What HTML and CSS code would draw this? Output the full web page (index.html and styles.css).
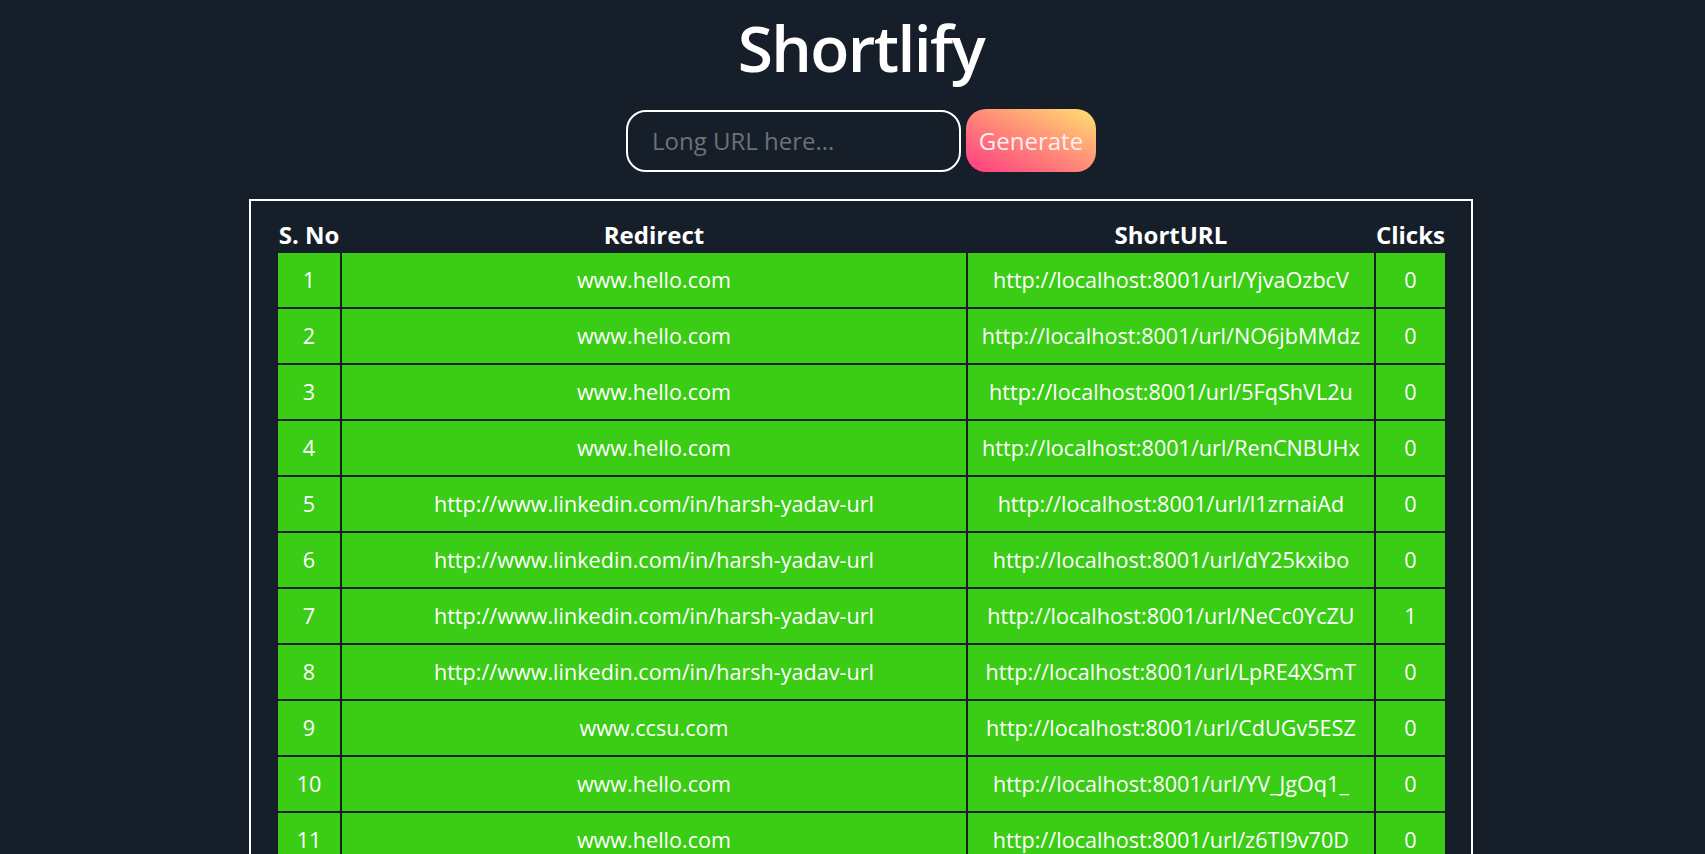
FILE: index.html
```html
<!DOCTYPE html>
<html lang="en">
<head>
<meta charset="utf-8">
<title>Shortlify</title>
<link rel="stylesheet" href="styles.css">
</head>
<body>
<div class="page">
  <h1 class="title">Shortlify</h1>
  <form class="url-form">
    <input class="url-input" type="text" placeholder="Long URL here...">
    <button class="gen-btn" type="button">Generate</button>
  </form>
  <div class="panel">
    <table class="url-table">
      <thead>
        <tr>
          <th class="c-no">S. No</th>
          <th class="c-redirect">Redirect</th>
          <th class="c-short">ShortURL</th>
          <th class="c-clicks">Clicks</th>
        </tr>
      </thead>
      <tbody>
        <tr><td>1</td><td>www.hello.com</td><td>http://localhost:8001/url/YjvaOzbcV</td><td>0</td></tr>
        <tr><td>2</td><td>www.hello.com</td><td>http://localhost:8001/url/NO6jbMMdz</td><td>0</td></tr>
        <tr><td>3</td><td>www.hello.com</td><td>http://localhost:8001/url/5FqShVL2u</td><td>0</td></tr>
        <tr><td>4</td><td>www.hello.com</td><td>http://localhost:8001/url/RenCNBUHx</td><td>0</td></tr>
        <tr><td>5</td><td>http://www.linkedin.com/in/harsh-yadav-url</td><td>http://localhost:8001/url/l1zrnaiAd</td><td>0</td></tr>
        <tr><td>6</td><td>http://www.linkedin.com/in/harsh-yadav-url</td><td>http://localhost:8001/url/dY25kxibo</td><td>0</td></tr>
        <tr><td>7</td><td>http://www.linkedin.com/in/harsh-yadav-url</td><td>http://localhost:8001/url/NeCc0YcZU</td><td>1</td></tr>
        <tr><td>8</td><td>http://www.linkedin.com/in/harsh-yadav-url</td><td>http://localhost:8001/url/LpRE4XSmT</td><td>0</td></tr>
        <tr><td>9</td><td>www.ccsu.com</td><td>http://localhost:8001/url/CdUGv5ESZ</td><td>0</td></tr>
        <tr><td>10</td><td>www.hello.com</td><td>http://localhost:8001/url/YV_JgOq1_</td><td>0</td></tr>
        <tr><td>11</td><td>www.hello.com</td><td>http://localhost:8001/url/z6TI9v70D</td><td>0</td></tr>
      </tbody>
    </table>
  </div>
</div>
</body>
</html>
```

FILE: styles.css
```css
html, body {
  margin: 0;
  padding: 0;
  background: #161f29;
}

body {
  font-family: "Open Sans", "Liberation Sans", sans-serif;
  color: #ffffff;
}

.page {
  padding-left: 17px;
  display: flex;
  flex-direction: column;
  align-items: center;
}

.title {
  margin: 4px 0 0;
  font-size: 64px;
  font-weight: 600;
  letter-spacing: -1.6px;
  line-height: 87px;
  color: #ffffff;
}

.url-form {
  margin: 18px 0 0;
  display: flex;
  align-items: center;
  gap: 5px;
}

.url-input {
  box-sizing: border-box;
  width: 335px;
  height: 62px;
  border: 2px solid #ffffff;
  border-radius: 20px;
  background: transparent;
  padding: 0 0 0 24px;
  font-family: "Open Sans", "Liberation Sans", sans-serif;
  font-size: 24px;
  color: #ffffff;
  outline: none;
}

.url-input::placeholder {
  color: #6c7176;
}

.gen-btn {
  box-sizing: border-box;
  width: 130px;
  height: 63px;
  border: none;
  border-radius: 20px;
  background: linear-gradient(to top right, #ff3a82 0%, #ff8a78 50%, #ffe270 100%);
  font-family: "Open Sans", "Liberation Sans", sans-serif;
  font-size: 24px;
  color: #ffeef0;
  padding: 0;
  cursor: pointer;
}

.panel {
  box-sizing: border-box;
  width: 1224px;
  margin-top: 27px;
  border: 2px solid #ffffff;
  padding: 16px 25px 20px 26px;
}

.url-table {
  width: 1169px;
  border-collapse: separate;
  border-spacing: 0;
}

.url-table th {
  box-sizing: border-box;
  padding: 0;
  border: 1px solid #161f29;
  font-size: 24px;
  font-weight: 700;
  line-height: 33px;
  white-space: nowrap;
  text-align: center;
}

.url-table .c-no { width: 64px; }
.url-table .c-redirect { width: 627px; }
.url-table .c-short { width: 408px; }
.url-table .c-clicks { width: 70px; }

.url-table td {
  background: #3bcc16;
  border: 1px solid #161f29;
  padding: 12px 10px;
  font-size: 21.6px;
  line-height: 30px;
  text-align: center;
  white-space: nowrap;
  color: #ffffff;
}
```
